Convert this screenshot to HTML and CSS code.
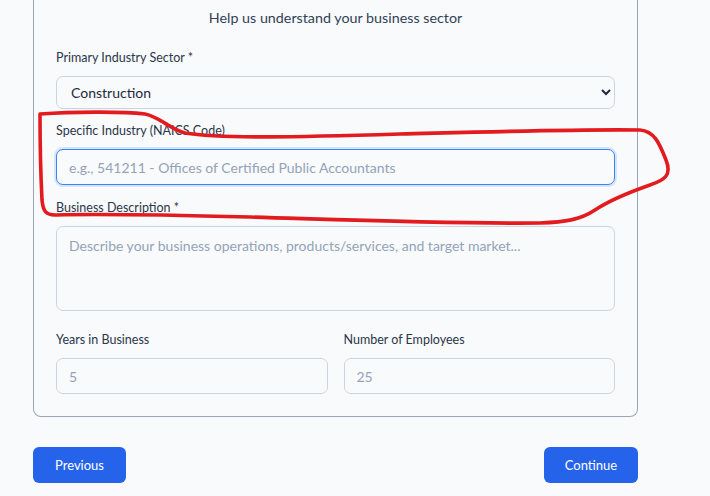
FILE: index.html
```html
<!DOCTYPE html>
<html lang="en">
<head>
<meta charset="utf-8">
<title>Business sector</title>
<link rel="stylesheet" href="styles.css">
</head>
<body>
<div class="page">
  <div class="card">
    <p class="subtitle">Help us understand your business sector</p>
    <div class="field">
      <label class="label" for="sector">Primary Industry Sector *</label>
      <select id="sector" class="control select">
        <option>Construction</option>
      </select>
    </div>
    <div class="field field-mid">
      <label class="label" for="naics">Specific Industry (NAICS Code)</label>
      <input id="naics" class="control input focused" type="text" placeholder="e.g., 541211 - Offices of Certified Public Accountants">
    </div>
    <div class="field field-desc">
      <label class="label" for="desc">Business Description *</label>
      <textarea id="desc" class="control textarea" placeholder="Describe your business operations, products/services, and target market..."></textarea>
    </div>
    <div class="row">
      <div class="field field-last">
        <label class="label" for="years">Years in Business</label>
        <input id="years" class="control input" type="text" placeholder="5">
      </div>
      <div class="field field-last">
        <label class="label" for="emp">Number of Employees</label>
        <input id="emp" class="control input" type="text" placeholder="25">
      </div>
    </div>
  </div>
  <div class="actions">
    <button class="btn btn-prev" type="button">Previous</button>
    <button class="btn btn-next" type="button">Continue</button>
  </div>
  <svg class="annotation" width="710" height="496" viewBox="0 0 710 496" aria-hidden="true">
    <path d="M40,114 C70,112 120,111 145,114 C160,117 168,128 185,133 C220,139 300,137 400,134 C480,132 580,129 640,130 C655,131 660,145 666,160 C672,175 665,180 650,185 C630,192 610,200 595,210 C580,220 565,222 540,223 C450,224 350,220 250,217 C170,215 90,214 55,215 C45,215 43,210 42,200 C41,180 40,140 40,114 Z" fill="none" stroke="#e31b1f" stroke-width="3.6" stroke-linejoin="round" stroke-linecap="round"/>
  </svg>
</div>
</body>
</html>
```

FILE: styles.css
```css
* {
  box-sizing: border-box;
}

html, body {
  margin: 0;
  background: #f8fafc;
}

body {
  font-family: Lato, "Open Sans", sans-serif;
  color: #334155;
}

.page {
  position: relative;
  width: 710px;
  height: 496px;
  overflow: hidden;
}

.card {
  margin-left: 33px;
  width: 605px;
  border: 1px solid #9aa5b8;
  border-top: none;
  border-radius: 0 0 8px 8px;
  background: #f8fafc;
  padding: 8px 22px 22px;
}

.subtitle {
  margin: 0 0 20px;
  font-size: 14.3px;
  line-height: 20px;
  text-align: center;
  color: #334155;
}

.field {
  margin-bottom: 12px;
}

.field-mid {
  margin-bottom: 13px;
}

.field-desc {
  margin-bottom: 19px;
}

.field-last {
  margin-bottom: 0;
}

.label {
  display: block;
  font-size: 12.5px;
  line-height: 20px;
  margin-bottom: 8px;
  color: #2b3648;
}

.control {
  display: block;
  width: 100%;
  font-family: Lato, "Open Sans", sans-serif;
  font-size: 14px;
  color: #1e293b;
  background: #f8fafc;
  border: 1px solid #cbd5e1;
  border-radius: 7px;
  outline: none;
}

.control::placeholder {
  color: #94a3b8;
}

.select {
  height: 33px;
  padding: 0 8px 0 10px;
}

.input {
  height: 36px;
  padding: 0 12px;
}

.focused {
  border-color: #3b82f6;
  box-shadow: 0 0 0 2px rgba(59, 130, 246, 0.18);
}

.textarea {
  height: 85px;
  padding: 9px 12px;
  resize: none;
  line-height: 20px;
}

.row {
  display: grid;
  grid-template-columns: 1fr 1fr;
  column-gap: 16px;
}

.actions {
  display: flex;
  justify-content: space-between;
  margin: 30px 0 0 33px;
  width: 605px;
}

.btn {
  height: 36px;
  border: none;
  border-radius: 6px;
  background: #2563eb;
  color: #ffffff;
  font-family: Lato, "Open Sans", sans-serif;
  font-size: 13px;
  padding: 0;
}

.btn-prev {
  width: 93px;
}

.btn-next {
  width: 94px;
}

.annotation {
  position: absolute;
  left: 0;
  top: 0;
  pointer-events: none;
}
```
